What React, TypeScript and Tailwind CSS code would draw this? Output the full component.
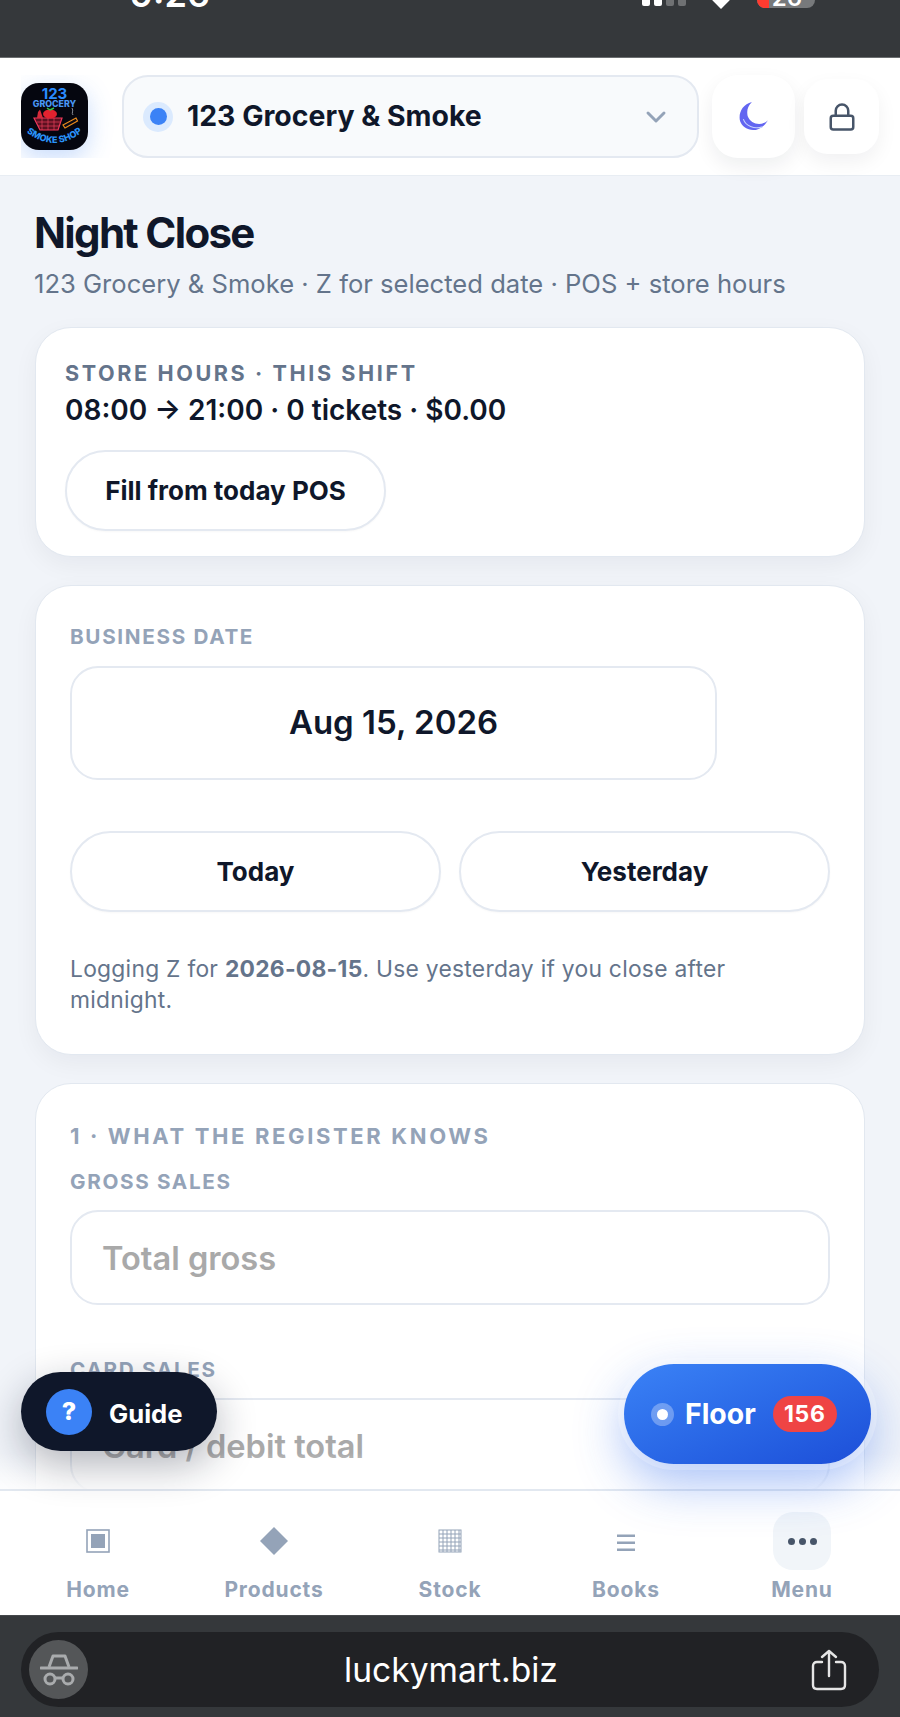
import { ChevronDown, Lock } from 'lucide-react';

const navItems = [
  { label: 'Home', icon: 'home' },
  { label: 'Products', icon: 'diamond' },
  { label: 'Stock', icon: 'grid' },
  { label: 'Books', icon: 'lines' },
  { label: 'Menu', icon: 'dots' },
];

function NavIcon({ icon }: { icon: string }) {
  if (icon === 'home') {
    return (
      <svg width="24" height="24" viewBox="0 0 24 24">
        <rect x="1" y="1" width="22" height="22" fill="none" stroke="#94a3b8" strokeWidth="1.6" />
        <rect x="5" y="5" width="14" height="14" fill="#94a3b8" />
      </svg>
    );
  }
  if (icon === 'diamond') {
    return (
      <svg width="30" height="30" viewBox="0 0 30 30">
        <path d="M15 1 L29 15 L15 29 L1 15 Z" fill="#94a3b8" />
      </svg>
    );
  }
  if (icon === 'grid') {
    return (
      <svg width="24" height="24" viewBox="0 0 24 24" stroke="#94a3b8" strokeWidth="1">
        <rect x="1" y="1" width="22" height="22" fill="none" />
        <path d="M5 1V23M9 1V23M13 1V23M17 1V23M21 1V23M1 5H23M1 9H23M1 13H23M1 17H23M1 21H23" />
      </svg>
    );
  }
  if (icon === 'lines') {
    return (
      <svg width="20" height="18" viewBox="0 0 20 18" fill="#94a3b8" className="mt-[4px]">
        <rect x="1" y="0.5" width="18" height="2.5" />
        <rect x="1" y="7.5" width="18" height="2.5" />
        <rect x="1" y="14.5" width="18" height="2.5" />
      </svg>
    );
  }
  return (
    <div className="flex h-[58px] w-[58px] items-center justify-center gap-[4px] rounded-[20px] bg-[#f1f5f9]">
      <span className="h-[7px] w-[7px] rounded-full bg-[#475569]" />
      <span className="h-[7px] w-[7px] rounded-full bg-[#475569]" />
      <span className="h-[7px] w-[7px] rounded-full bg-[#475569]" />
    </div>
  );
}

function Logo() {
  return (
    <svg width="67" height="67" viewBox="0 0 67 67" className="rounded-[18px] shadow-[0_8px_24px_rgba(59,130,246,0.28)]">
      <rect width="67" height="67" fill="#05060f" />
      <text x="33.5" y="15.5" textAnchor="middle" fontSize="15" fontWeight="700" fill="#2a8cff" fontFamily="Inter, sans-serif">123</text>
      <text x="33.5" y="24" textAnchor="middle" fontSize="8.8" fontWeight="800" fill="#4a96f5" fontFamily="Inter, sans-serif">GROCERY</text>
      <path d="M13 35 H41 L37 47 H19 Z" fill="#5c1020" stroke="#f0385a" strokeWidth="1.2" />
      <path d="M16 39H39M17 43H38M21 35V47M27 35V47M33 35V47" stroke="#e8405c" strokeWidth="0.7" />
      <ellipse cx="29" cy="31" rx="7" ry="4.5" fill="#e3222f" />
      <path d="M29 27 L33 25 M29 27 L26 25" stroke="#36c24a" strokeWidth="1.5" />
      <path d="M16 35 L17 29 L19 26.5 L22 35 Z" fill="#d72a3a" />
      <path d="M42 42 L55 35 L56.5 38 L44 45 Z" fill="#0a0a14" stroke="#e88a1c" strokeWidth="1.2" />
      <path d="M52 32 C50 30 53 28 51 25" stroke="#8a8f99" strokeWidth="1" fill="none" />
      <path id="logo-arc" d="M3 47 Q33 73 64 47" fill="none" />
      <text fontSize="9" fontWeight="800" fill="#2a93fa" fontFamily="Inter, sans-serif">
        <textPath href="#logo-arc" startOffset="50%" textAnchor="middle">SMOKE SHOP</textPath>
      </text>
    </svg>
  );
}

function PillButton({ label, className = '' }: { label: string; className?: string }) {
  return (
    <button className={`h-[81px] rounded-full border-2 border-[#e4e9f1] bg-white text-[26px] font-bold text-[#0f172a] shadow-[0_1px_2px_rgba(15,23,42,0.03)] ${className}`}>
      {label}
    </button>
  );
}

export default function App() {
  return (
    <div className="relative flex h-[1717px] w-[900px] flex-col overflow-hidden bg-[#f1f4f9] font-['Inter',sans-serif]">
      {/* phone status bar, cut off at the top of the shot */}
      <div className="flex h-[58px] shrink-0 items-start justify-between overflow-hidden border-b border-[#6b6e70] bg-[#35383b] pl-[130px] pr-[85px] text-white">
        <span className="mt-[-29px] text-[36px] font-semibold leading-[46px]">9:26</span>
        <div className="flex items-start">
          <div className="mt-[-10px] flex gap-[4px]">
            <span className="h-[16px] w-[8px] rounded-[2px] bg-white" />
            <span className="h-[16px] w-[8px] rounded-[2px] bg-white" />
            <span className="h-[16px] w-[8px] rounded-[2px] bg-[#6f7173]" />
            <span className="h-[16px] w-[8px] rounded-[2px] bg-[#6f7173]" />
          </div>
          <div className="ml-[28px] mt-[-8px] h-[14px] w-[14px] rotate-45 bg-white" />
          <div className="ml-[29px] mt-[-18px] flex h-[26px] w-[58px] items-end justify-center overflow-hidden rounded-[8px] bg-[#77797b] text-[24px] font-semibold leading-[20px]">
            <span className="h-full w-[12px] shrink-0 bg-[#ff3b30]" />
            <span className="flex-1 pr-[10px] text-center">26</span>
          </div>
        </div>
      </div>

      {/* app header */}
      <header className="z-10 flex h-[118px] shrink-0 items-center border-b border-[#e8edf3] bg-white pl-[21px] pr-[21px]">
        <div className="h-[83px] w-[101px] shrink-0 overflow-hidden pt-[8px]">
          <Logo />
        </div>
        <div className="flex h-[83px] w-[577px] shrink-0 items-center rounded-[26px] border-2 border-[#e4e9f1] bg-[#f8fafc] pl-[19px] pr-[25px]">
          <span className="flex h-[30px] w-[30px] items-center justify-center rounded-full bg-[#dbeafe]">
            <span className="h-[17px] w-[17px] rounded-full bg-[#3b82f6]" />
          </span>
          <span className="ml-[14px] flex-1 text-[28.4px] font-bold text-[#0f172a]">123 Grocery &amp; Smoke</span>
          <ChevronDown size={32} strokeWidth={2.2} className="text-[#94a3b8]" />
        </div>
        <button className="ml-[13px] flex h-[83px] w-[83px] shrink-0 items-center justify-center rounded-[26px] bg-white shadow-[0_8px_20px_rgba(15,23,42,0.07)]">
          <svg width="31" height="31" viewBox="0 0 29 29">
            <path d="M13 1 C4 3 0 12 2 19 C5 28 20 32 28 18 C22 24 12 22 9 14 C8 9 9 5 13 1 Z" fill="#6366f1" />
            <path d="M5 17 C7 23 15 27 23 24" stroke="#c7d2fe" strokeWidth="1" fill="none" />
          </svg>
        </button>
        <button className="ml-[9px] flex h-[75px] w-[75px] shrink-0 items-center justify-center rounded-[24px] bg-white shadow-[0_8px_20px_rgba(15,23,42,0.06)]">
          <Lock size={30} strokeWidth={2} className="text-[#475569]" />
        </button>
      </header>

      {/* page */}
      <main className="relative min-h-0 flex-1 overflow-hidden px-[35px] pt-[27px]">
        <h1 className="-ml-[1px] text-[42px] font-bold leading-[60px] tracking-[-0.04em] text-[#0f172a]">Night Close</h1>
        <p className="-ml-[1px] mt-[4px] text-[25.6px] leading-[34px] text-[#64748b]">
          123 Grocery &amp; Smoke · Z for selected date · POS + store hours
        </p>

        <section className="mt-[26px] h-[230px] rounded-[36px] border border-[#e2e8f0] bg-white px-[29px] pt-[31px] shadow-[0_8px_24px_rgba(15,23,42,0.05)]">
          <div className="text-[21.6px] font-bold leading-[28px] tracking-[0.12em] text-[#64748b]">STORE HOURS · THIS SHIFT</div>
          <div className="mt-[4px] text-[28px] font-semibold leading-[38px] text-[#0f172a]">08:00 → 21:00 · 0 tickets · $0.00</div>
          <PillButton label="Fill from today POS" className="mt-[21px] w-[321px]" />
        </section>

        <section className="mt-[28px] h-[470px] rounded-[36px] border border-[#e2e8f0] bg-white px-[34px] pt-[37px] shadow-[0_8px_24px_rgba(15,23,42,0.05)]">
          <div className="text-[20.7px] font-bold leading-[28px] tracking-[0.08em] text-[#94a3b8]">BUSINESS DATE</div>
          <div className="mt-[15px] flex h-[114px] w-[647px] items-center justify-center rounded-[28px] border-2 border-[#e4e9f1] text-[33px] font-semibold text-[#0f172a]">
            Aug 15, 2026
          </div>
          <div className="mt-[51px] grid grid-cols-2 gap-[18px]">
            <PillButton label="Today" />
            <PillButton label="Yesterday" />
          </div>
          <p className="mt-[41px] max-w-[700px] text-[22.8px] leading-[31px] tracking-[0.012em] text-[#64748b]">
            Logging Z for <b className="font-bold">2026-08-15</b>. Use yesterday if you close after midnight.
          </p>
        </section>

        <section className="mt-[28px] h-[500px] rounded-[36px] border border-[#e2e8f0] bg-white px-[34px] pt-[38px]">
          <div className="text-[22px] font-bold leading-[28px] tracking-[0.12em] text-[#94a3b8]">1 · WHAT THE REGISTER KNOWS</div>
          <div className="mt-[18px] text-[20.7px] font-bold leading-[28px] tracking-[0.08em] text-[#94a3b8]">GROSS SALES</div>
          <input
            placeholder="Total gross"
            className="mt-[14px] h-[95px] w-full rounded-[28px] border-2 border-[#e4e9f1] px-[30px] text-[32.6px] font-semibold placeholder:text-[#a9a9a9]"
          />
          <div className="mt-[51px] text-[20.7px] font-bold leading-[28px] tracking-[0.08em] text-[#94a3b8]">CARD SALES</div>
          <input
            placeholder="Card / debit total"
            className="mt-[14px] h-[95px] w-full rounded-[28px] border-2 border-[#e4e9f1] px-[30px] text-[32.6px] font-semibold placeholder:text-[#a9a9a9]"
          />
        </section>

        {/* soft fade above the tab bar */}
        <div className="absolute inset-x-0 bottom-0 h-[36px] bg-gradient-to-b from-white/0 to-white/90" />
      </main>

      {/* tab bar */}
      <nav className="z-10 grid h-[126px] shrink-0 grid-cols-5 border-t-2 border-[#e2e8f0] bg-white px-[10px]">
        {navItems.map((item) => (
          <div key={item.label} className="flex flex-col items-center">
            <div className="flex h-[87px] items-center justify-center pb-[7px] pt-[20px]">
              <NavIcon icon={item.icon} />
            </div>
            <span className="text-[21px] font-bold leading-[24px] tracking-[0.04em] text-[#94a3b8]">{item.label}</span>
          </div>
        ))}
      </nav>

      {/* browser chrome */}
      <div className="z-10 flex h-[102px] shrink-0 items-start border-t border-[#45484b] bg-[#35383b] px-[21px] pt-[16px]">
        <div className="flex h-[75px] w-full items-center rounded-full bg-[#212225] pl-[8px] pr-[32px]">
          <div className="flex h-[59px] w-[59px] items-center justify-center rounded-full bg-[#545658]">
            <svg width="38" height="34" viewBox="0 0 38 34" fill="none" stroke="#a9abad" strokeWidth="3">
              <path d="M9 14 L13 3 H25 L29 14" strokeLinejoin="round" />
              <path d="M1 15 H37" strokeLinecap="round" />
              <circle cx="10" cy="26" r="5" />
              <circle cx="28" cy="26" r="5" />
              <path d="M15 25 H23" />
            </svg>
          </div>
          <span className="flex-1 pl-[3px] text-center text-[33.6px] leading-[40px] text-white">luckymart.biz</span>
          <svg width="36" height="42" viewBox="0 0 36 42" fill="none" stroke="#e5e5e5" strokeWidth="2.4" strokeLinecap="round" strokeLinejoin="round">
            <path d="M11 13 H6 C3.5 13 2 14.5 2 17 V36 C2 38.5 3.5 40 6 40 H30 C32.5 40 34 38.5 34 36 V17 C34 14.5 32.5 13 30 13 H25" />
            <path d="M18 27 V2 M11 8 L18 2 L25 8" />
          </svg>
        </div>
      </div>

      {/* floating buttons */}
      <button className="absolute left-[21px] top-[1372px] z-20 flex h-[79px] w-[196px] items-center rounded-full bg-[#0f172a] pl-[25px] shadow-[0_14px_40px_rgba(15,23,42,0.32)]">
        <span className="flex h-[46px] w-[46px] items-center justify-center rounded-full bg-[#3b82f6] text-[25px] font-extrabold text-white">?</span>
        <span className="ml-[17px] mt-[4px] text-[25.6px] font-bold leading-[32px] text-white">Guide</span>
      </button>
      <button className="absolute left-[624px] top-[1364px] z-20 flex h-[100px] w-[247px] items-center rounded-full bg-gradient-to-br from-[#3b82f6] to-[#1d4ed8] pl-[27px] shadow-[0_0_0_6px_rgba(255,255,255,0.22),0_18px_50px_rgba(37,99,235,0.42)]">
        <span className="flex h-[23px] w-[23px] items-center justify-center rounded-full bg-white/30">
          <span className="h-[11px] w-[11px] rounded-full bg-white" />
        </span>
        <span className="ml-[11px] text-[28.4px] font-bold text-white">Floor</span>
        <span className="ml-[17px] flex h-[36px] w-[64px] items-center justify-center rounded-full bg-[#ef4444] text-[23px] font-bold tracking-[0.03em] text-white">156</span>
      </button>
    </div>
  );
}
